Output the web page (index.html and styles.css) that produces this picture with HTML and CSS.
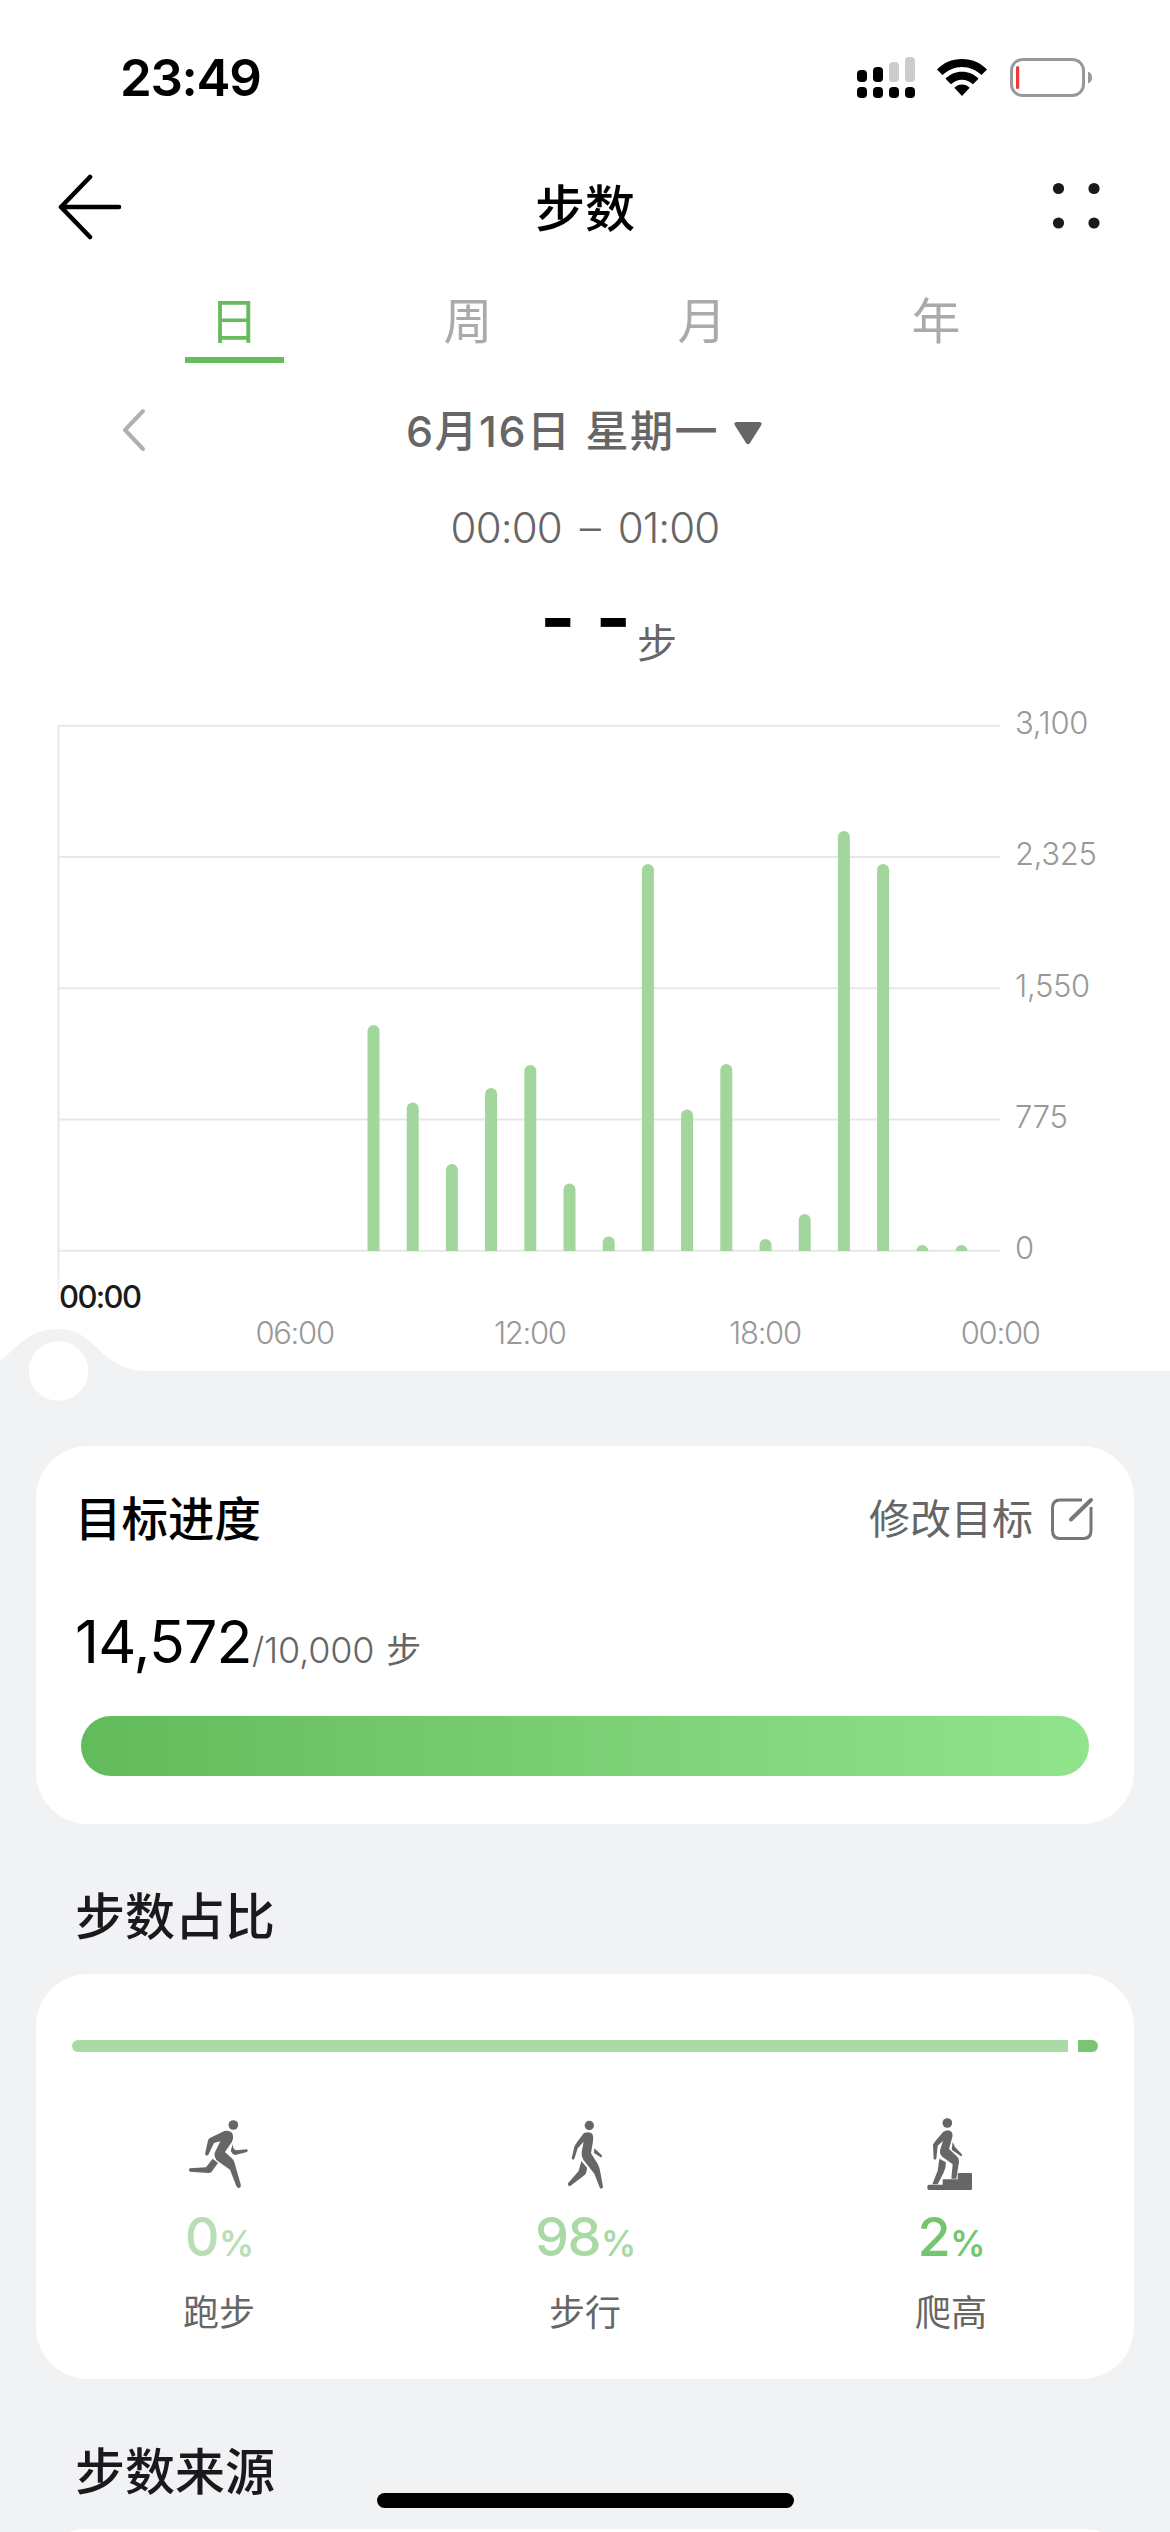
FILE: index.html
```html
<!DOCTYPE html>
<html lang="zh-CN">
<head>
<meta charset="utf-8">
<title>步数</title>
<link rel="stylesheet" href="styles.css">
</head>
<body>
<div class="screen">
  <header class="status">
    <span class="clock">23:49</span>
    <div class="indicators">
      <svg class="signal" width="58" height="42" viewBox="0 0 58 42">
        <g fill="#000"><rect x="0" y="13" width="10" height="12" rx="4"/><rect x="16" y="10" width="10" height="15" rx="4"/><rect x="0" y="30" width="10" height="11" rx="4"/><rect x="16" y="30" width="10" height="11" rx="4"/><rect x="32" y="30" width="10" height="11" rx="4"/><rect x="48" y="30" width="10" height="11" rx="4"/></g>
        <g fill="#ccc"><rect x="32" y="5" width="10" height="20" rx="4"/><rect x="48" y="0" width="10" height="25" rx="4"/></g>
      </svg>
      <svg class="wifi" width="50" height="38" viewBox="0 0 50 38">
        <path d="M25 0C35 0 44 4 50 10.600L44.500 16C39 11 32.500 8 25 8S11 11 5.500 16L0 10.600C6 4 15 0 25 0ZM25 12.800C31.500 12.800 37 15.300 41.500 19.700L36 25.300C33 22.400 29.200 20.700 25 20.700S17 22.400 14 25.300L8.500 19.700C13 15.300 18.500 12.800 25 12.800ZM25 25.500C28 25.500 30.700 26.700 32.700 28.800L25 37L17.300 28.800C19.300 26.700 22 25.500 25 25.500Z"/>
      </svg>
      <svg class="battery" width="83" height="40" viewBox="0 0 83 40">
        <rect x="1.500" y="1.500" width="72" height="36" rx="11" fill="none" stroke="#999" stroke-width="3"/>
        <rect x="6" y="8" width="3.200" height="23" rx="1.500" fill="#f03a37"/>
        <path d="M78 13.500Q82 15 82 19.500T78 25.500Z" fill="#999"/>
      </svg>
    </div>
  </header>

  <nav class="nav">
    <svg width="64" height="66" viewBox="0 0 64 66" fill="none" stroke="#000" stroke-width="4.600" stroke-linecap="round" stroke-linejoin="round"><path d="M32 3L3 33L32 63M3 33H61"/></svg>
    <h1 class="nav-title">步数</h1>
    <svg width="64" height="66" viewBox="0 0 64 66" fill="#1a1a1a"><circle cx="22.500" cy="14.500" r="5.600"/><circle cx="58" cy="14.500" r="5.600"/><circle cx="22.500" cy="49" r="5.600"/><circle cx="58" cy="49" r="5.600"/></svg>
  </nav>

  <div class="tabs">
    <span class="tab active">日</span><span class="tab">周</span><span class="tab">月</span><span class="tab">年</span>
  </div>

  <div class="date-row">
    <svg width="26" height="46" viewBox="0 0 26 46" fill="none" stroke="#b0b0b0" stroke-width="4" stroke-linecap="round" stroke-linejoin="round"><path d="M22 4L4 23L22 42"/></svg>
    <span class="date">6月16日 星期一</span>
    <svg width="28" height="24" viewBox="0 0 28 24"><path d="M3 1H25Q29 1 27 4.500L16 22Q14 24.500 12 22L1 4.500Q-1 1 3 1Z" fill="#666"/></svg>
  </div>

  <div class="range">00:00 – 01:00</div>
  <div class="value"><div class="dashes"><span>-</span><span>-</span></div><span class="unit">步</span></div>

  <section class="chart">
    <div class="plot-row">
      <svg class="plot" width="1000" height="615" viewBox="0 0 1000 615">
        <defs><linearGradient id="fade" x1="0" y1="0" x2="0" y2="1"><stop offset=".9" stop-color="#e7e7e8"/><stop offset="1" stop-color="#e7e7e8" stop-opacity=".2"/></linearGradient></defs>
        <path d="M59 25.700H1000M59 157H1000M59 288.300H1000M59 419.500H1000M59 550.800H1000" stroke="#e7e7e8" stroke-width="2"/>
        <rect x="57.500" y="25" width="2" height="588" fill="url(#fade)"/>
        <g fill="#a3d69d">
          <path d="M367.500 551V331a6 6 0 0 1 12 0V551Z"/>
          <path d="M406.700 551V408.500a6 6 0 0 1 12 0V551Z"/>
          <path d="M445.900 551V470a6 6 0 0 1 12 0V551Z"/>
          <path d="M485.100 551V394a6 6 0 0 1 12 0V551Z"/>
          <path d="M524.300 551V371a6 6 0 0 1 12 0V551Z"/>
          <path d="M563.500 551V489.500a6 6 0 0 1 12 0V551Z"/>
          <path d="M602.700 551V542.500a6 6 0 0 1 12 0V551Z"/>
          <path d="M641.900 551V170a6 6 0 0 1 12 0V551Z"/>
          <path d="M681.100 551V415.500a6 6 0 0 1 12 0V551Z"/>
          <path d="M720.300 551V370a6 6 0 0 1 12 0V551Z"/>
          <path d="M759.500 551V545a6 6 0 0 1 12 0V551Z"/>
          <path d="M798.700 551V520a6 6 0 0 1 12 0V551Z"/>
          <path d="M837.900 551V137a6 6 0 0 1 12 0V551Z"/>
          <path d="M877.100 551V170a6 6 0 0 1 12 0V551Z"/>
          <path d="M916.300 551a6 6 0 0 1 12 0Z"/>
          <path d="M955.500 551a6 6 0 0 1 12 0Z"/>
        </g>
      </svg>
      <div class="y-axis"><span>3,100</span><span>2,325</span><span>1,550</span><span>775</span><span>0</span></div>
    </div>
    <div class="cursor-time">00:00</div>
    <div class="x-axis"><span>06:00</span><span>12:00</span><span>18:00</span><span>00:00</span></div>
    <svg class="handle" width="160" height="76" viewBox="0 0 160 76">
      <path d="M0 33C17 20 28 1 58.500 1C98 1 98 43 148 43V76H0Z" fill="#f1f2f4"/>
      <circle cx="58.500" cy="43" r="29.800" fill="#fff"/>
    </svg>
  </section>

  <main class="body">
    <section class="card goal">
      <div class="goal-head">
        <h2 class="goal-title">目标进度</h2>
        <span class="edit">修改目标</span>
        <svg width="46" height="46" viewBox="0 0 46 46" fill="none" stroke="#777" stroke-linecap="round"><path d="M33 4H11Q3.500 4 3.500 12V34.500Q3.500 42.500 11 42.500H34.500Q42 42.500 42 34.500V11" stroke-width="3" stroke-linecap="butt"/><path d="M22 23.500L42 4" stroke-width="4"/></svg>
      </div>
      <div class="goal-value"><span class="steps">14,572</span><span class="target">/10,000</span><span class="target-unit">步</span></div>
      <div class="progress"></div>
    </section>

    <h2 class="section-title">步数占比</h2>
    <section class="card share">
      <div class="share-bar"><span class="seg walk"></span><span class="seg climb"></span></div>
      <div class="share-cols">
        <div class="col">
          <svg width="100" height="100" viewBox="-3 0 300 300" fill="#666"><circle cx="190" cy="75" r="14.500"/><path d="M121 113L163 93Q180 89 188 102Q192 114 186 125L165 156L187 176Q191 180 193 187L212 253Q214 264 206 264Q202 264 199 258L180 209L144 184Q131 173 134 158L151 124L132 129L115 164Q109 170 105 162L114 121Q115 116 121 113Z"/><path d="M188 133Q189 149 198 151L231 148Q236 152 231 156L196 165Q186 163 182 153Z"/><path d="M128 176L144 189L125 215Q122 219 115 219L60 215Q54 211 59 205L108 202Z"/></svg>
          <div class="pct run-c">0<small>%</small></div><div class="label">跑步</div>
        </div>
        <div class="col">
          <svg width="100" height="100" viewBox="-15 0 300 300" fill="#666"><circle cx="148" cy="76.500" r="14"/><path d="M132 99Q149 93 157 101Q161 108 159 123L153 160L173 191Q180 203 182 222L189 260Q187 268 180 265L163 221L130 179Q124 171 125 156L131 125L113 145L103 177Q98 182 95 175L103 140Q106 132 132 99Z"/><path d="M163 145L184 164Q189 171 182 172L162 159Z"/><path d="M124 183L141 203Q140 219 135 224L91 258Q82 259 84 250L116 213Z"/></svg>
          <div class="pct walk-c">98<small>%</small></div><div class="label">步行</div>
        </div>
        <div class="col">
          <svg width="100" height="100" viewBox="3 0 300 300" fill="#666"><circle cx="142" cy="69" r="14.500"/><path d="M130 95Q145 86 154 95Q160 102 156 115L147 147L172 170Q178 176 177 186L169 236H154L158 193L127 170Q117 162 121 148L129 123L113 137L109 176Q105 181 101 176L99 135Q99 130 130 95Z"/><path d="M158 126L165 141L185 162Q189 170 182 168L155 149Z"/><path d="M118 176L138 187Q138 205 130 220L113 253H97L113 212Z"/><path d="M86 254H128V240Q128 238 131 238H173V222Q173 219 176 219H213Q216 219 216 222V266Q216 270 212 270H86Q81 270 82 262Q81 254 86 254Z"/></svg>
          <div class="pct climb-c">2<small>%</small></div><div class="label">爬高</div>
        </div>
      </div>
    </section>

    <h2 class="section-title source">步数来源</h2>
    <section class="card next"></section>
  </main>
  <div class="home"></div>
</div>
</body>
</html>
```
FILE: styles.css
```css
* { box-sizing: border-box; margin: 0; padding: 0; }
body {
  width: 1170px;
  height: 2532px;
  overflow: hidden;
  background: #fff;
  font-family: Inter, "Noto Sans CJK SC", sans-serif;
  color: #000;
}
svg { display: block; flex: none; }
h1, h2 { font-weight: 500; }
.screen { position: relative; width: 1170px; height: 2532px; overflow: hidden; display: flex; flex-direction: column; }
.screen > * { flex: none; }

.status { height: 156px; display: flex; justify-content: space-between; align-items: center; padding: 0 77px 0 120px; }
.clock { font-size: 51px; font-weight: 600; line-height: 60px; letter-spacing: -1.3px; }
.indicators { display: flex; align-items: center; }
.wifi { margin-left: 22px; }
.battery { margin-left: 23px; }

.nav { height: 102px; display: flex; justify-content: space-between; align-items: center; padding: 0 70px 0 58px; }
.nav-title { font-size: 50px; line-height: 60px; padding: 3px 0 0 12px; }

.tabs { height: 105px; display: flex; padding: 34px 117px 0; }
.tab { width: 234px; display: flex; flex-direction: column; align-items: center; font-size: 49px; font-weight: 400; line-height: 60px; color: #aaa; }
.active { color: #66bb5d; }
.active::after { content: ""; width: 99px; height: 6px; margin-top: 5px; background: #66bb5d; }

.date-row { height: 134px; display: flex; align-items: center; padding-left: 121px; }
.date { margin-left: 259px; width: 310px; padding-top: 2px; font-size: 43px; font-weight: 500; line-height: 60px; letter-spacing: 1.5px; word-spacing: 1px; color: #666; white-space: nowrap; }
.date + svg { margin-left: 18px; margin-top: 6px; }

.range { height: 59px; line-height: 61px; font-size: 42px; font-weight: 350; color: #666; text-align: center; letter-spacing: -0.9px; word-spacing: 7px; }
.value { height: 144px; display: flex; padding: 36px 0 0 540px; }
.dashes { width: 97px; height: 60px; display: flex; gap: 20px; font-size: 76px; font-weight: 700; line-height: 50px; }
.unit { font-size: 40px; line-height: 60px; padding-top: 22px; color: #666; }

.chart { position: relative; height: 671px; color: #999; font-size: 31px; font-weight: 350; }
.plot-row { display: flex; height: 580px; }
.plot { overflow: visible; }
.y-axis { display: flex; flex-direction: column; justify-content: space-between; height: 557px; margin: 7px 0 0 15px; line-height: 32px; letter-spacing: -0.3px; }
.cursor-time { padding-left: 59px; line-height: 34px; font-weight: 500; letter-spacing: -1.6px; color: #1a1a1a; }
.x-axis { display: grid; grid-template-columns: repeat(4, 235.2px); margin: 3px 0 0 177px; text-align: center; line-height: 32px; letter-spacing: -1.3px; }
.handle { position: absolute; left: 0; bottom: -33px; }

.body { height: 1161px; background: #f1f2f4; padding: 75px 36px 0; }
.card { background: #fff; border-radius: 52px; }
.goal { height: 378px; padding: 40px 39px 0 40px; }
.goal-head { height: 66px; display: flex; align-items: center; }
.goal-title { font-size: 46.5px; line-height: 66px; margin-left: -1px; }
.edit { margin-left: auto; margin-right: 16px; font-size: 41px; line-height: 66px; color: #666; }
.goal-value { height: 90px; margin-top: 45px; display: flex; align-items: baseline; line-height: 90px; }
.steps { font-size: 59px; letter-spacing: -0.8px; margin-left: -1px; }
.target { font-size: 36px; font-weight: 350; letter-spacing: -0.2px; color: #666; }
.target-unit { font-size: 35px; color: #666; margin-left: 12px; }
.progress { width: 1008px; height: 60px; margin: 29px 0 0 5px; border-radius: 30px; background: linear-gradient(90deg, #62bb5a, #7bcf75 50%, #92e48c); }

.section-title { height: 150px; padding: 63px 0 0 39px; font-size: 50px; line-height: 60px; color: #1a1a1c; }
.share { height: 405px; padding-top: 66px; }
.share-bar { display: flex; gap: 10px; margin-left: 36px; width: 1026px; height: 12px; }
.walk { width: 996px; border-radius: 6px 0 0 6px; background: #aadba6; }
.climb { width: 20px; border-radius: 0 6px 6px 0; background: #7ac574; }
.share-cols { display: grid; grid-template-columns: repeat(3, 1fr); margin-top: 48px; }
.col { display: flex; flex-direction: column; align-items: center; }
.pct { height: 60px; margin-top: 7px; font-size: 54px; font-weight: 500; line-height: 60px; letter-spacing: -1.5px; }
.pct small { font-size: 35px; font-weight: 600; margin-left: 1px; letter-spacing: -1px; }
.run-c { color: #b9deb5; }
.walk-c { color: #a9d9a5; }
.climb-c { color: #74c66e; }
.label { margin-top: 26px; font-size: 36px; line-height: 40px; color: #666; }
.next { height: 100px; }

.home { position: absolute; left: 377px; top: 2493px; width: 417px; height: 15px; border-radius: 8px; background: #000; }
```
